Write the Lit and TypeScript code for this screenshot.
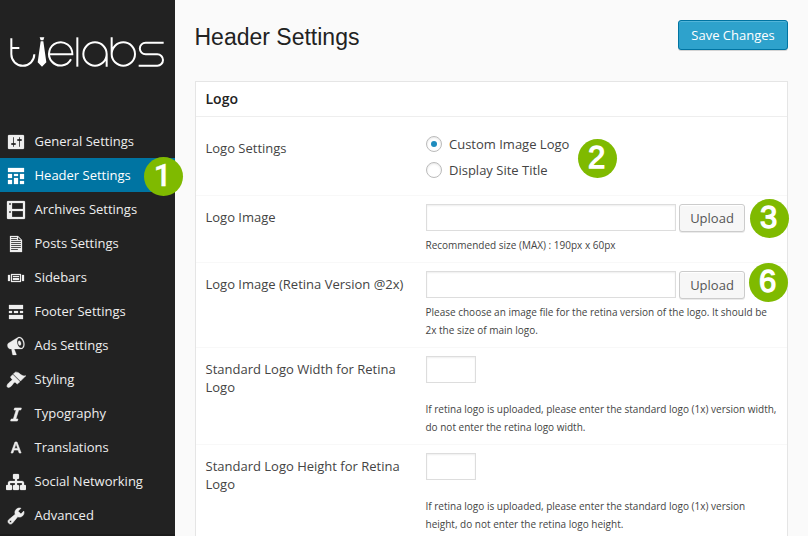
import { LitElement, html, css, svg } from "lit";
import { customElement, property } from "lit/decorators.js";

const ICONS: Record<string, string> = {
  general: "M18 16V4c0-.55-.45-1-1-1H3c-.55 0-1 .45-1 1v12c0 .55.45 1 1 1h14c.55 0 1-.45 1-1zM8 11h1c.55 0 1 .45 1 1s-.45 1-1 1H8v1.5c0 .28-.22.5-.5.5s-.5-.22-.5-.5V13H6c-.55 0-1-.45-1-1s.45-1 1-1h1V5.5c0-.28.22-.5.5-.5s.5.22.5.5V11zm5-2h-1c-.55 0-1-.45-1-1s.45-1 1-1h1V5.5c0-.28.22-.5.5-.5s.5.22.5.5V7h1c.55 0 1 .45 1 1s-.45 1-1 1h-1v5.5c0 .28-.22.5-.5.5s-.5-.22-.5-.5V9z",
  header: "M2 2h16v4H2V2zM2 12V8h4v4H2zM8 10V8h4v2H8zM14 13V8h4v5h-4zM8 18v-6h4v6H8zM2 18v-4h4v4H2zM14 18v-3h4v3h-4z",
  archives: "M19 18V2c0-.55-.45-1-1-1H2c-.55 0-1 .45-1 1v16c0 .55.45 1 1 1h16c.55 0 1-.45 1-1zM4 3c.55 0 1 .45 1 1s-.45 1-1 1-1-.45-1-1 .45-1 1-1zM17 3v6H6V3h11zM4 11c.55 0 1 .45 1 1s-.45 1-1 1-1-.45-1-1 .45-1 1-1zM17 11v6H6v-6h11z",
  posts: "M12 2l4 4v12H4V2h8zM5 3v1h6V3H5zM12 6h3l-3-3v3zM5 5v1h6V5H5zM15 8V7H5v1h10zM5 9v1h10V9H5zM15 12v-1H5v1h10zM5 13v1h10v-1H5zM12 16v-1H5v1h7z",
  sidebars: "M5 14V6h10v8H5zM2 13V7h2v6H2zM6 7v6h8V7H6zM16 7h2v6h-2V7zM13 9V8H7v1h6zM13 12v-2H7v2h6z",
  footer: "M17 7H3V3h14v4zM6 11H3V9h3v2zM12 11H8V9h4v2zM17 11h-3V9h3v2zM17 17H3v-4h14v4z",
  ads: "M18.15 5.94c.46 1.62.38 3.22-.02 4.48-.42 1.28-1.26 2.18-2.3 2.48-.16.06-.26.06-.4.06-.06.02-.12.02-.18.02-.06.02-.14.02-.22.02h-6.8l2.22 5.5c.02.14-.06.26-.14.34-.08.1-.24.16-.34.16H6.95c-.1 0-.26-.06-.34-.16-.08-.08-.16-.2-.14-.34l-1-5.5H4.25l-.02-.02c-.5.06-1.08-.18-1.54-.62s-.88-1.08-1.06-1.88c-.24-.8-.2-1.56-.02-2.2.18-.62.58-1.08 1.06-1.3l.02-.02 9-5.4c.1-.06.18-.1.24-.16.06-.04.14-.08.24-.12.16-.08.28-.12.5-.18 1.04-.3 2.24.1 3.22.98s1.84 2.24 2.26 3.86zM15.57 11.92h-.02c.4-.1.74-.34 1.04-.7.58-.7.86-1.76.86-3.04 0-.64-.1-1.3-.28-1.98-.34-1.36-1.02-2.5-1.78-3.24s-1.68-1.1-2.46-.88c-.82.22-1.4.96-1.7 2-.32 1.04-.28 2.36.06 3.72.38 1.36 1 2.5 1.8 3.24.78.74 1.62 1.1 2.48.88zM13.03 4.84c.22-.04.42-.02.62.04.38.16.76.48 1.02 1s.42 1.2.42 1.78c0 .3-.04.56-.12.8-.18.48-.44.84-.86.94-.34.1-.8-.06-1.14-.4s-.64-.86-.78-1.5c-.18-.62-.12-1.24.02-1.72s.48-.84.82-.94z",
  styling: "M14.48 11.06L7.41 3.99l1.5-1.5c.5-.56 2.3-.47 3.51.32 1.21.8 1.43 1.28 2.91 2.1 1.18.64 2.45 1.26 4.45.85zM13.77 11.77L6.7 4.7 4.93 6.47c-.39.39-.39 1.02 0 1.41l1.06 1.06c.39.39.39 1.03 0 1.42-.6.6-1.43 1.11-2.21 1.69-.35.26-.7.53-1.01.84C1.43 14.23.4 16.08 1.4 17.07c.99 1 2.84-.03 4.18-1.36.31-.31.58-.66.85-1.02.57-.78 1.08-1.61 1.69-2.21.39-.39 1.02-.39 1.41 0l1.06 1.06c.39.39 1.02.39 1.41 0z",
  typography: "M14.78 6h-2.13l-2.8 9h2.12l-.62 2H4.6l.62-2h2.14l2.8-9H8.03l.62-2h6.75z",
  translations: "M13.23 15h1.9L11 4H9L5 15h1.88l1.07-3h4.18zM11.7 10.46H8.51L10 5.6z",
  social: "M18 13h1c.55 0 1 .45 1 1.01v2.98c0 .56-.45 1.01-1 1.01h-4c-.55 0-1-.45-1-1.01v-2.98c0-.56.45-1.01 1-1.01h1v-2h-5v2h1c.55 0 1 .45 1 1.01v2.98c0 .56-.45 1.01-1 1.01H8c-.55 0-1-.45-1-1.01v-2.98c0-.56.45-1.01 1-1.01h1v-2H4v2h1c.55 0 1 .45 1 1.01v2.98C6 17.55 5.55 18 5 18H1c-.55 0-1-.45-1-1.01v-2.98C0 13.45.45 13 1 13h1v-2c0-1.1.9-2 2-2h5V7H8c-.55 0-1-.45-1-1.01V3.01C7 2.45 7.45 2 8 2h4c.55 0 1 .45 1 1.01v2.98C13 6.55 12.55 7 12 7h-1v2h5c1.1 0 2 .9 2 2v2z",
  advanced: "M16.68 9.77c-1.34 1.34-3.3 1.67-4.95.99l-5.41 6.52c-.99.99-2.59.99-3.58 0s-.99-2.59 0-3.57l6.52-5.42c-.68-1.65-.35-3.61.99-4.95 1.28-1.28 3.12-1.62 4.72-1.06l-2.89 2.89 2.82 2.82 2.86-2.87c.53 1.58.18 3.39-1.08 4.65zM3.81 16.21c.4.39 1.04.39 1.43 0 .4-.4.4-1.04 0-1.43-.39-.4-1.03-.4-1.43 0-.39.39-.39 1.03 0 1.43z",
};

const MENU: [string, string][] = [
  ["general", "General Settings"],
  ["header", "Header Settings"],
  ["archives", "Archives Settings"],
  ["posts", "Posts Settings"],
  ["sidebars", "Sidebars"],
  ["footer", "Footer Settings"],
  ["ads", "Ads Settings"],
  ["styling", "Styling"],
  ["typography", "Typography"],
  ["translations", "Translations"],
  ["social", "Social Networking"],
  ["advanced", "Advanced"],
];

@customElement("step-badge")
class StepBadge extends LitElement {
  static styles = css`
    :host {
      display: flex;
      align-items: center;
      justify-content: center;
      width: 39px;
      height: 39px;
      border-radius: 50%;
      background: #7fba00;
      color: #fff;
      font: 31px/38px "Liberation Sans", sans-serif;
      -webkit-text-stroke: 1.3px #fff;
    }
    .digit { margin: -2px 2px 0 0; }
    .one {
      font-family: Roboto, sans-serif;
      font-size: 31px;
      font-weight: 500;
      -webkit-text-stroke: 0.4px #fff;
      margin: -1px 2px 0 0;
    }
  `;
  @property({ type: Number }) step = 1;
  render() {
    return html`<span class=${this.step === 1 ? "one" : "digit"}>${this.step}</span>`;
  }
}

@customElement("side-menu")
class SideMenu extends LitElement {
  static styles = css`
    :host {
      display: block;
      width: 175px;
      flex: none;
      background: #222;
      color: #eee;
      font-size: 13px;
    }
    .logo { display: block; width: 158px; height: 34px; padding: 35px 0 55px 8px; }
    .line { fill: none; stroke: #fff; stroke-width: 6; }
    .solid { fill: #fff; }
    .item {
      display: flex;
      align-items: center;
      position: relative;
      height: 34px;
      gap: 8px;
      padding-left: 6.5px;
      box-sizing: border-box;
      white-space: nowrap;
    }
    .active { background: #0074a2; color: #fff; }
    .icon {
      width: 20px;
      height: 20px;
      flex: none;
      margin: 2px 0.5px 0 -0.5px;
      fill: #eee;
      stroke: #eee;
      stroke-width: 0.25;
      fill-rule: evenodd;
    }
    .typography, .translations, .styling, .advanced { stroke-width: 0.6; }
    .active .icon { fill: #fff; stroke: #fff; }
    .end { height: 4px; background: #1c1c1c; margin-top: 2px; }
    step-badge { position: absolute; left: 144px; top: -1px; z-index: 2; }
  `;
  render() {
    return html`
      <svg class="logo" viewBox="24 30 474 102" aria-label="tielabs">
        <path class="line" d="M34 40V88a34.5 34.5 0 0 0 69 0M34 69H58" />
        <path class="solid" d="M119 37h14l-3 9h-8zM122 49h8l9 63-13 13-13-13z" />
        <path class="line" d="M148 88H217A35 35 0 1 0 213 103" />
        <path class="line" d="M232 37V125" />
        <path class="line" d="M320 125V87A35 35 0 1 0 285 122A35 35 0 0 0 320 87" />
        <path class="line" d="M335 37V87A35 35 0 1 0 370 52A35 35 0 0 0 335 87" />
        <path class="line" d="M491 53H437a17.5 17.5 0 0 0 0 35H472a17 17 0 0 1 0 34H416" />
      </svg>
      ${MENU.map(([key, label], i) => html`
        <div class="item ${i === 1 ? "active" : ""}">
          <svg class="icon ${key}" viewBox="0 0 20 20">${svg`<path d=${ICONS[key]} />`}</svg>
          <span>${label}</span>
          ${i === 1 ? html`<step-badge .step=${1}></step-badge>` : ""}
        </div>`)}
      <div class="end"></div>
    `;
  }
}

@customElement("app-root")
class AppRoot extends LitElement {
  static styles = css`
    :host {
      display: flex;
      height: 536px;
      overflow: hidden;
      background: #fafafa;
      color: #444;
      font: 13px/18px "Open Sans", sans-serif;
    }
    .main { width: 593px; margin-left: 20px; }
    .top { display: flex; justify-content: space-between; height: 81px; }
    .title { margin: 23px 0 0 -0.5px; color: #222; font: 23px/29px "Liberation Sans", sans-serif; }
    .save {
      box-sizing: border-box;
      width: 110px;
      height: 30px;
      margin-top: 20px;
      border: 1px solid #0074a2;
      border-radius: 3px;
      background: #2ea2cc;
      color: #fff;
      text-align: center;
      line-height: 28px;
      box-shadow: inset 0 1px 0 rgba(120, 200, 230, 0.5), 0 1px 0 rgba(0, 0, 0, 0.15);
    }
    .panel { border: 1px solid #e5e5e5; background: #fff; }
    .heading {
      height: 34px;
      border-bottom: 1px solid #eee;
      padding-left: 9.5px;
      color: #222;
      font-size: 14px;
      font-weight: 600;
      line-height: 33px;
    }
    .row {
      box-sizing: border-box;
      display: grid;
      grid-template-columns: 200.5px 352px;
      column-gap: 20px;
      padding: 8px 0 0 9.5px;
      border-bottom: 1px solid #f8f8f8;
    }
    .r1 { height: 79px; padding-top: 18px; }
    .r2 { height: 67px; }
    .r3 { height: 85px; }
    .r4 { height: 97px; }
    .label { padding-top: 4px; }
    .radios { display: flex; flex-direction: column; gap: 8px; position: relative; }
    .choice { display: flex; align-items: center; gap: 7px; height: 18px; }
    .radio {
      box-sizing: border-box;
      width: 16px;
      height: 16px;
      border: 1px solid #bbb;
      border-radius: 50%;
      background: #fff;
      box-shadow: inset 0 1px 2px rgba(0, 0, 0, 0.1);
      display: grid;
      place-items: center;
    }
    .dot { width: 6px; height: 6px; border-radius: 50%; background: #1e8cbe; }
    .field { display: flex; align-items: flex-start; gap: 3px; position: relative; }
    .input {
      box-sizing: border-box;
      width: 250px;
      height: 27px;
      border: 1px solid #ddd;
      box-shadow: inset 0 1px 2px rgba(0, 0, 0, 0.07);
    }
    .small { width: 50px; }
    .upload {
      box-sizing: border-box;
      width: 66px;
      height: 28px;
      border: 1px solid #ccc;
      border-radius: 3px;
      background: #f7f7f7;
      color: #555;
      box-shadow: inset 0 1px 0 #fff, 0 1px 0 rgba(0, 0, 0, 0.08);
      text-align: center;
      line-height: 27px;
    }
    .hint { margin-left: -0.5px; font-size: 10px; white-space: nowrap; }
    .r2 .hint { margin-top: 4px; }
    .r3 .hint { margin-top: 4px; }
    .r4 .hint { margin-top: 17px; }
    step-badge { position: absolute; z-index: 2; }
    .b2 { left: 152px; top: 4px; }
    .b3 { left: 324px; top: -5px; }
    .b6 { left: 323px; top: -8px; }
  `;
  render() {
    return html`
      <side-menu></side-menu>
      <div class="main">
        <div class="top">
          <h1 class="title">Header Settings</h1>
          <div class="save">Save Changes</div>
        </div>
        <div class="panel">
          <div class="heading">Logo</div>
          <div class="row r1">
            <div class="label">Logo Settings</div>
            <div class="radios">
              <div class="choice"><span class="radio"><span class="dot"></span></span>Custom Image Logo</div>
              <div class="choice"><span class="radio"></span>Display Site Title</div>
              <step-badge class="b2" .step=${2}></step-badge>
            </div>
          </div>
          <div class="row r2">
            <div class="label">Logo Image</div>
            <div>
              <div class="field">
                <div class="input"></div><div class="upload">Upload</div>
                <step-badge class="b3" .step=${3}></step-badge>
              </div>
              <div class="hint">Recommended size (MAX) : 190px x 60px</div>
            </div>
          </div>
          <div class="row r3">
            <div class="label">Logo Image (Retina Version @2x)</div>
            <div>
              <div class="field">
                <div class="input"></div><div class="upload">Upload</div>
                <step-badge class="b6" .step=${6}></step-badge>
              </div>
              <div class="hint">Please choose an image file for the retina version of the logo. It should be<br />2x the size of main logo.</div>
            </div>
          </div>
          <div class="row r4">
            <div class="label">Standard Logo Width for Retina Logo</div>
            <div>
              <div class="input small"></div>
              <div class="hint">If retina logo is uploaded, please enter the standard logo (1x) version width,<br />do not enter the retina logo width.</div>
            </div>
          </div>
          <div class="row r4">
            <div class="label">Standard Logo Height for Retina Logo</div>
            <div>
              <div class="input small"></div>
              <div class="hint">If retina logo is uploaded, please enter the standard logo (1x) version<br />height, do not enter the retina logo height.</div>
            </div>
          </div>
        </div>
      </div>
    `;
  }
}
